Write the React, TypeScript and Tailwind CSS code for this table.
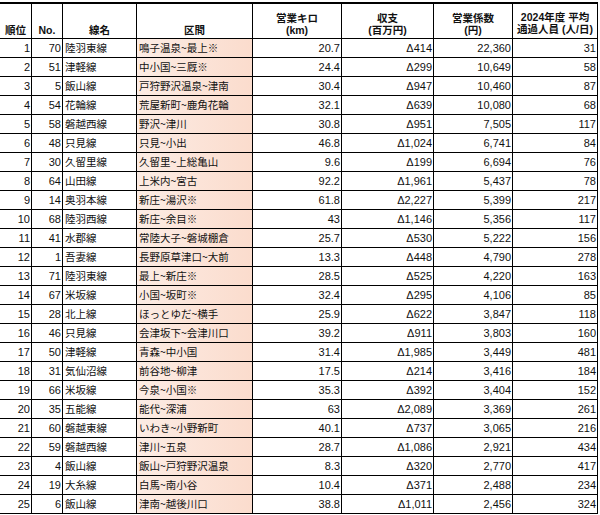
const rows: [number, number, string, string, string, string, string, number][] = [
  [1, 70, "陸羽東線", "鳴子温泉~最上※", "20.7", "Δ414", "22,360", 31],
  [2, 51, "津軽線", "中小国~三厩※", "24.4", "Δ299", "10,649", 58],
  [3, 5, "飯山線", "戸狩野沢温泉~津南", "30.4", "Δ947", "10,460", 87],
  [4, 54, "花輪線", "荒屋新町~鹿角花輪", "32.1", "Δ639", "10,080", 68],
  [5, 58, "磐越西線", "野沢~津川", "30.8", "Δ951", "7,505", 117],
  [6, 48, "只見線", "只見~小出", "46.8", "Δ1,024", "6,741", 84],
  [7, 30, "久留里線", "久留里~上総亀山", "9.6", "Δ199", "6,694", 76],
  [8, 64, "山田線", "上米内~宮古", "92.2", "Δ1,961", "5,437", 78],
  [9, 14, "奥羽本線", "新庄~湯沢※", "61.8", "Δ2,227", "5,399", 217],
  [10, 68, "陸羽西線", "新庄~余目※", "43", "Δ1,146", "5,356", 117],
  [11, 41, "水郡線", "常陸大子~磐城棚倉", "25.7", "Δ530", "5,222", 156],
  [12, 1, "吾妻線", "長野原草津口~大前", "13.3", "Δ448", "4,790", 278],
  [13, 71, "陸羽東線", "最上~新庄※", "28.5", "Δ525", "4,220", 163],
  [14, 67, "米坂線", "小国~坂町※", "32.4", "Δ295", "4,106", 85],
  [15, 28, "北上線", "ほっとゆだ~横手", "25.9", "Δ622", "3,847", 118],
  [16, 46, "只見線", "会津坂下~会津川口", "39.2", "Δ911", "3,803", 160],
  [17, 50, "津軽線", "青森~中小国", "31.4", "Δ1,985", "3,449", 481],
  [18, 31, "気仙沼線", "前谷地~柳津", "17.5", "Δ214", "3,416", 184],
  [19, 66, "米坂線", "今泉~小国※", "35.3", "Δ392", "3,404", 152],
  [20, 35, "五能線", "能代~深浦", "63", "Δ2,089", "3,369", 261],
  [21, 60, "磐越東線", "いわき~小野新町", "40.1", "Δ737", "3,065", 216],
  [22, 59, "磐越西線", "津川~五泉", "28.7", "Δ1,086", "2,921", 434],
  [23, 4, "飯山線", "飯山~戸狩野沢温泉", "8.3", "Δ320", "2,770", 417],
  [24, 19, "大糸線", "白馬~南小谷", "10.4", "Δ371", "2,488", 234],
  [25, 6, "飯山線", "津南~越後川口", "38.8", "Δ1,011", "2,456", 324],
];

const cell = "h-[19px] border-r border-b border-[#000] flex items-center overflow-hidden whitespace-nowrap";
const num = `${cell} justify-end pr-[1px] text-[11px]`;
const jp = `${cell} pl-[2px] text-[10.5px] font-['Noto_Sans_CJK_JP',sans-serif]`;
const head = "h-[35px] border-r border-b border-[#000] flex flex-col items-center justify-end pb-[2px] font-bold text-[10.5px] leading-[12px] text-center";

export default function App() {
  return (
    <div
      className="w-[600px] h-[515px] bg-white text-[#111] overflow-hidden"
      style={{ fontFamily: '"Liberation Sans", "Noto Sans CJK JP", sans-serif' }}
    >
      <div className="mt-[2px] w-[598px] border-t-2 border-[#000] grid grid-cols-[32px_31px_74px_116px_89px_92px_79px_85px]">
        {/* header */}
        <div className={head}>順位</div>
        <div className={head}>No.</div>
        <div className={head}>線名</div>
        <div className={head}>区間</div>
        <div className={`${head} pb-[1px]`}>
          <span>営業キロ</span>
          <span>(km)</span>
        </div>
        <div className={`${head} pb-[1px]`}>
          <span>収支</span>
          <span>(百万円)</span>
        </div>
        <div className={`${head} pb-[1px]`}>
          <span>営業係数</span>
          <span>(円)</span>
        </div>
        <div className={`${head} justify-center pb-[3px] text-[9px]`}>
          <span>2024年度 平均</span>
          <span>通過人員 (人/日)</span>
        </div>

        {rows.map((r) => (
          <div key={r[0]} className="contents">
            <div className={num}>{r[0]}</div>
            <div className={num}>{r[1]}</div>
            <div className={jp}>{r[2]}</div>
            <div className={`${jp} bg-gradient-to-r from-[#fcece4] to-[#fbdccd]`}>{r[3]}</div>
            <div className={num}>{r[4]}</div>
            <div className={num}>{r[5]}</div>
            <div className={num}>{r[6]}</div>
            <div className={num}>{r[7]}</div>
          </div>
        ))}
      </div>
    </div>
  );
}
